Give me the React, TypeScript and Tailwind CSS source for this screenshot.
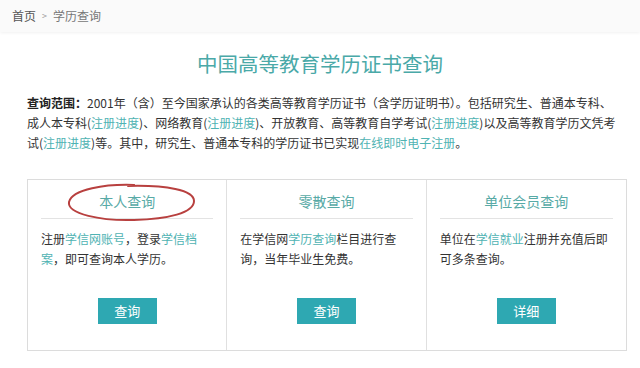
const cn = { fontFamily: '"Microsoft YaHei", "Noto Sans CJK SC", "Liberation Sans", sans-serif' };

const Link = ({ children }: { children: React.ReactNode }) => (
  <span className="text-[#4fb3b3]">{children}</span>
);

const Card = ({
  title,
  body,
  button,
  circled,
  last,
}: {
  title: string;
  body: React.ReactNode;
  button: string;
  circled?: boolean;
  last?: boolean;
}) => {
  return (
    <div className={`flex w-[200px] flex-col px-[13px] ${last ? '' : 'border-r border-[#e0e0e0]'}`}>
      <div className="relative flex h-[39px] items-end justify-center border-b border-[#e3e3e3] pb-[7px]">
        <span className="text-[14px] leading-[20px] text-[#58aaa6]">{title}</span>
        {circled && (
          <svg
            className="absolute left-[25px] top-[3px]"
            width="131"
            height="39"
            viewBox="0 0 131 39"
            fill="none"
          >
            <path
              d="M68 2 C 40 1, 6 6, 3 19 C 1 31, 35 38, 68 37 C 102 36, 128 30, 128 18 C 128 7, 100 2, 62 3"
              stroke="#b8403f"
              strokeWidth="2"
              strokeLinecap="round"
            />
          </svg>
        )}
      </div>
      <div className="mt-[10px] h-[60px] text-[12px] leading-[20px] text-[#333]">{body}</div>
      <div className="mt-[9px] flex justify-center">
        <div className="flex h-[26px] w-[59px] items-center justify-center bg-[#2ea8b2] text-[13px] text-white">
          {button}
        </div>
      </div>
    </div>
  );
};

export default function App() {
  return (
    <div className="h-[368px] w-[640px] overflow-hidden bg-white" style={cn}>
      <div className="flex h-[32px] items-center gap-[6px] bg-[#fafafa] pl-[12px] text-[12px] shadow-[0_1px_3px_rgba(0,0,0,0.06)]">
        <span className="text-[#555]">首页</span>
        <span className="text-[9px] text-[#999]">&gt;</span>
        <span className="text-[#777]">学历查询</span>
      </div>

      <h1 className="mt-[16px] text-center text-[20.5px] leading-[30px] text-[#4aa9a8]">
        中国高等教育学历证书查询
      </h1>

      <div className="mt-[15px] pl-[27px] text-[12px] leading-[20px] text-[#333] whitespace-nowrap">
        <div>
          <b className="text-[#222]">查询范围：</b>2001年（含）至今国家承认的各类高等教育学历证书（含学历证明书）。包括研究生、普通本专科、
        </div>
        <div>
          成人本专科(<Link>注册进度</Link>)、网络教育(<Link>注册进度</Link>)、开放教育、高等教育自学考试(<Link>注册进度</Link>)以及高等教育学历文凭考
        </div>
        <div>
          试(<Link>注册进度</Link>)等。其中，研究生、普通本专科的学历证书已实现<Link>在线即时电子注册</Link>。
        </div>
      </div>

      <div className="ml-[27px] mt-[26px] flex h-[172px] w-[600px] border border-[#dcdcdc]">
        <Card
          title="本人查询"
          circled
          button="查询"
          body={
            <>
              注册<Link>学信网账号</Link>，登录<Link>学信档</Link>
              <br />
              <Link>案</Link>，即可查询本人学历。
            </>
          }
        />
        <Card
          title="零散查询"
          button="查询"
          body={
            <>
              在学信网<Link>学历查询</Link>栏目进行查
              <br />
              询，当年毕业生免费。
            </>
          }
        />
        <Card
          title="单位会员查询"
          button="详细"
          last
          body={
            <>
              单位在<Link>学信就业</Link>注册并充值后即
              <br />
              可多条查询。
            </>
          }
        />
      </div>
    </div>
  );
}
